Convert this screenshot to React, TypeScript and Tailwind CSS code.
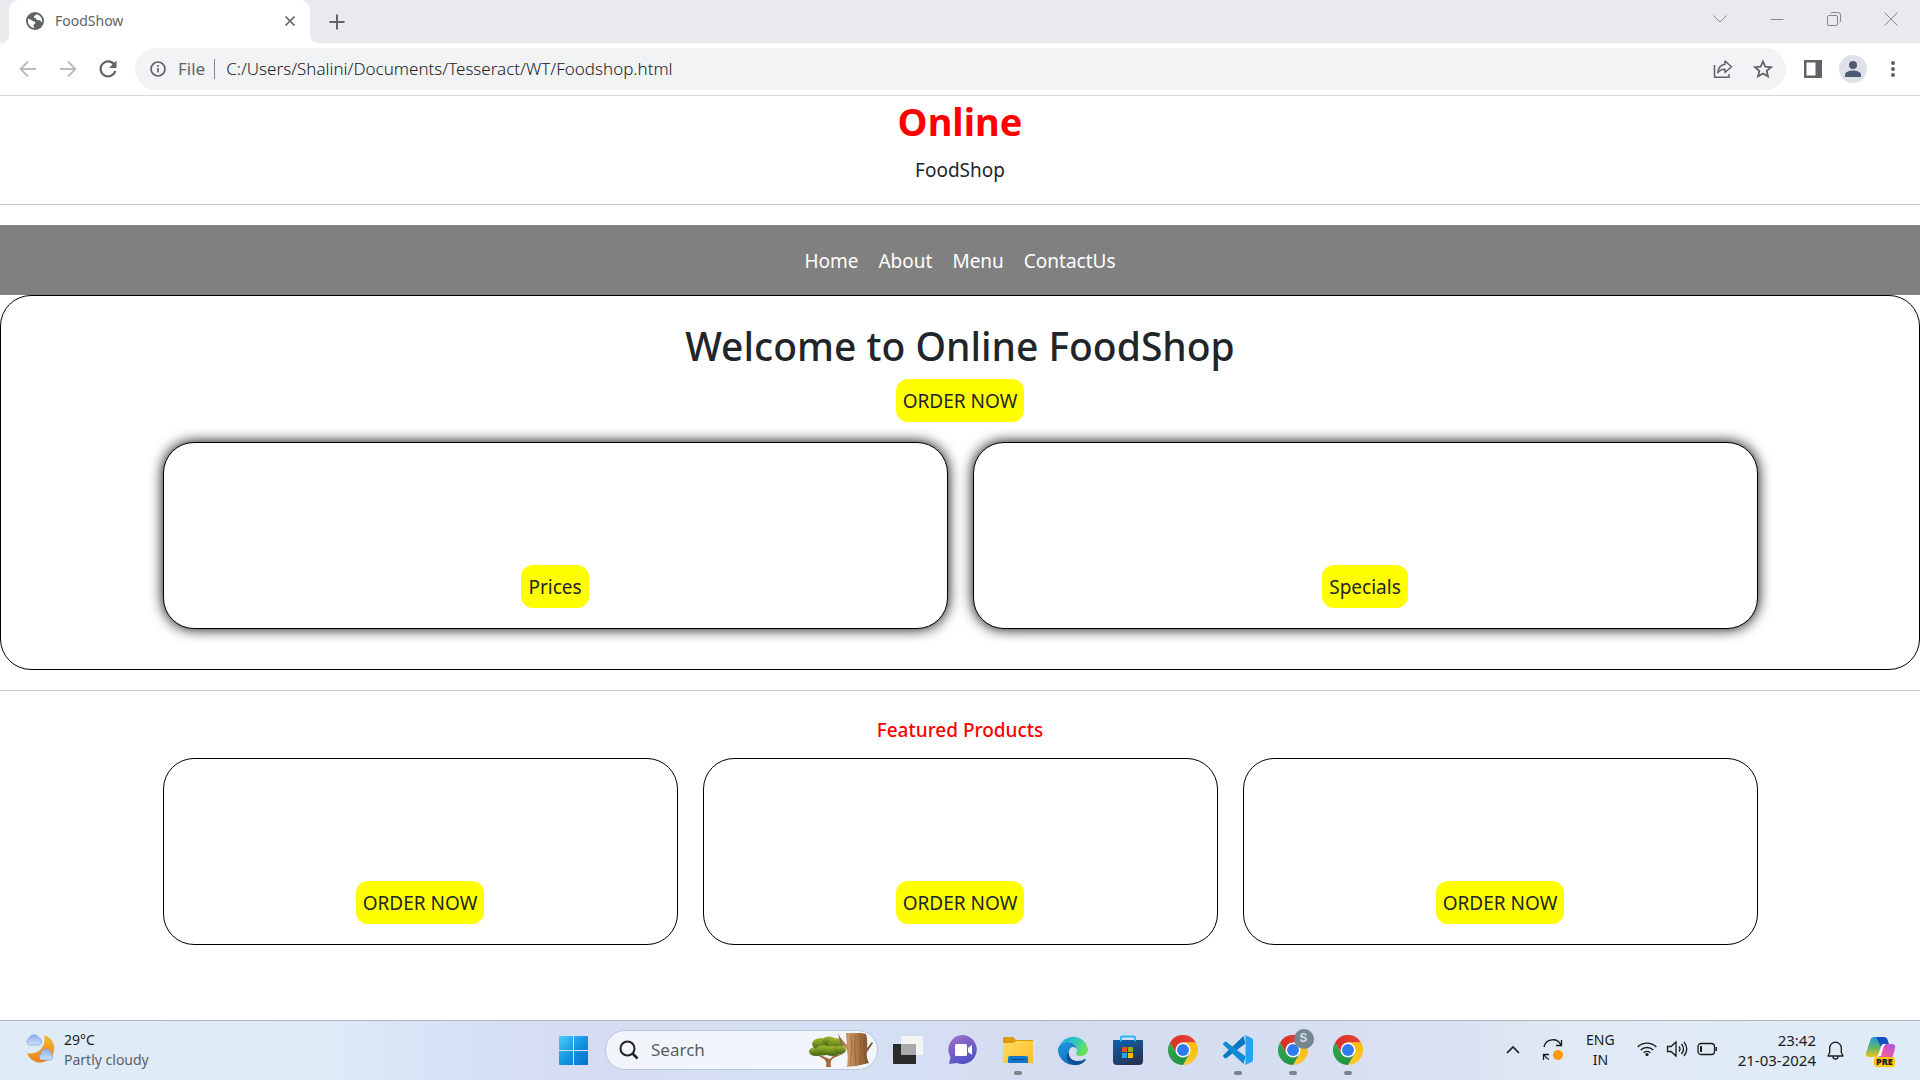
import React from "react";

const strip = "flex items-center";

function Chrome({ id, badge }: { id: string; badge?: boolean }) {
  return (
    <span className="relative block size-[30px]">
      <svg viewBox="0 0 48 48" className="size-[30px]" aria-hidden="true">
        <defs>
          <linearGradient id={id + "r"} x1="0" y1="0" x2="1" y2="0"><stop stopColor="#d93025" /><stop offset="1" stopColor="#ea4335" /></linearGradient>
          <linearGradient id={id + "y"} x1="0" y1="0" x2="0" y2="1"><stop stopColor="#fbbc04" /><stop offset="1" stopColor="#fcc934" /></linearGradient>
          <linearGradient id={id + "g"} x1="0" y1="0" x2="1" y2="1"><stop stopColor="#34a853" /><stop offset="1" stopColor="#1e8e3e" /></linearGradient>
        </defs>
        <path d="M24 12h20.8A24 24 0 0 0 3.2 12l10.4 18z" fill={`url(#${id}r)`} />
        <path d="M34.4 30 24 48a24 24 0 0 0 20.8-36H24z" fill={`url(#${id}y)`} />
        <path d="M13.6 30 3.2 12A24 24 0 0 0 24 48l10.4-18z" fill={`url(#${id}g)`} />
        <circle cx="24" cy="24" r="12" fill="#fff" />
        <circle cx="24" cy="24" r="9.5" fill="#2f7af0" />
      </svg>
      {badge && (
        <span className="absolute -top-1.5 left-4 flex size-5 items-center justify-center rounded-full bg-[#74868f] font-['Liberation_Mono'] text-[13px] font-bold text-[#d5dde2]">S</span>
      )}
    </span>
  );
}

function Task({ label, running, children }: { label: string; running?: boolean; children: React.ReactNode }) {
  return (
    <button type="button" aria-label={label} className="flex w-[55px] flex-col items-center pt-[14px]">
      {children}
      <span className={running ? "mt-1.5 h-1 w-2 rounded-full bg-[#7d828c]" : "mt-1.5 h-1 w-2"} />
    </button>
  );
}

function Pill({ children }: { children: React.ReactNode }) {
  return (
    <a href="#order" className="inline-block rounded-xl bg-[#ffff00] px-[7px] pt-[7px] pb-[5px] text-[19px] leading-[31px] text-[#212529]">
      {children}
    </a>
  );
}

function BrowserBar() {
  return (
    <header className="border-b border-[#d5d7da] bg-white font-['Noto_Sans',sans-serif]">
      <div className="flex h-[43px] bg-[#e8eaed]">
        <div className="w-[9px] bg-white"><div className="h-full rounded-br-lg bg-[#e8eaed]" /></div>
        <div className={`${strip} w-[301px] rounded-t-[10px] bg-white pr-[14px] pb-[2px] pl-[17px]`}>
          <svg viewBox="0 0 24 24" className="size-[18px]" aria-hidden="true">
            <circle cx="12" cy="12" r="12" fill="#5f6368" />
            <path d="M3 9c3 .3 4 2 6.500 3.200 1.500.700 3 .500 3 2 0 1.700-2.500 1.600-2.500 3.300 0 1.500.800 2.300.800 4A9.800 9.800 0 0 1 3 9zM14 3c-.500 1.800-3.500 1.500-3.500 3.500 0 1.700 3 .800 3 2.600S16 11 18 11c1.700 0 1.500 2.500 3.500 2.500A9.600 9.600 0 0 0 14 3z" fill="#fff" />
          </svg>
          <span className="ml-[11px] flex-1 text-sm text-[#5f6368]">FoodShow</span>
          <button type="button" aria-label="Close tab">
            <svg viewBox="0 0 12 12" className="size-3" stroke="#5f6368" strokeWidth="1.700"><path d="M1.500 1.500l9 9M10.500 1.500l-9 9" /></svg>
          </button>
        </div>
        <div className="w-[9px] bg-white"><div className="h-full rounded-bl-lg bg-[#e8eaed]" /></div>
        <button type="button" aria-label="New tab" className="ml-[10px]">
          <svg viewBox="0 0 16 16" className="size-4" stroke="#5f6368" strokeWidth="2"><path d="M8 .500v15M.500 8h15" /></svg>
        </button>
        <div className="ml-auto flex items-center gap-[43px] pr-[22px] pb-[6px]">
          <button type="button" aria-label="Search tabs"><svg viewBox="0 0 14 14" className="size-[14px]" fill="none" stroke="#85878b"><path d="M.500 3.500 7 10l6.500-6.500" /></svg></button>
          <button type="button" aria-label="Minimize"><svg viewBox="0 0 14 14" className="size-[14px]" fill="none" stroke="#85878b"><path d="M.500 7.500h13" /></svg></button>
          <button type="button" aria-label="Restore"><svg viewBox="0 0 14 14" className="size-[14px]" fill="none" stroke="#85878b"><rect x=".500" y="3.500" width="10" height="10" rx="1.500" /><path d="M3.500 1.500q.500-1 1.500-1h6q2.500 0 2.500 2.500v6q0 1-1 1.500" /></svg></button>
          <button type="button" aria-label="Close"><svg viewBox="0 0 14 14" className="size-[14px]" fill="none" stroke="#85878b"><path d="M.500.500l13 13M13.500.500l-13 13" /></svg></button>
        </div>
      </div>
      <div className={`${strip} h-[52px] pr-[25px] pl-[19px]`}>
        <button type="button" aria-label="Back"><svg viewBox="0 0 18 18" className="size-[18px]" fill="none" stroke="#b9bbbe" strokeWidth="1.800"><path d="M17 9H2M9 1.500 1.500 9 9 16.500" /></svg></button>
        <button type="button" aria-label="Forward" className="ml-[22px]"><svg viewBox="0 0 18 18" className="size-[18px]" fill="none" stroke="#b9bbbe" strokeWidth="1.800"><path d="M1 9h15M9 1.500 16.500 9 9 16.500" /></svg></button>
        <button type="button" aria-label="Reload" className="ml-[22px]"><svg viewBox="0 0 18 18" className="size-[18px]" fill="none" stroke="#5f6368" strokeWidth="2.200"><path d="M15.200 4.500A7.500 7.500 0 1 0 16.300 11" /><path d="M17.500.500v7.500H10z" fill="#5f6368" stroke="none" /></svg></button>
        <div className={`${strip} ml-[18px] h-[42px] flex-1 rounded-full bg-[#f1f3f4] pr-[13px] pl-[15px]`}>
          <svg viewBox="0 0 16 16" className="size-4 shrink-0" fill="none" stroke="#5f6368" strokeWidth="1.700"><circle cx="8" cy="8" r="7" /><path d="M8 7v4.500M8 4v1.700" /></svg>
          <span className="ml-[12px] text-[17px] text-[#5f6368]">File</span>
          <span className="ml-[9px] h-5 w-px bg-[#80868b]" />
          <input aria-label="Address" defaultValue="C:/Users/Shalini/Documents/Tesseract/WT/Foodshop.html" className="ml-[11px] min-w-0 flex-1 bg-transparent text-[17px] font-light text-[#202124] outline-none" />
          <button type="button" aria-label="Share"><svg viewBox="0 0 20 20" className="size-5" fill="none" stroke="#5f6368" strokeWidth="1.500"><path d="M1.500 6v12.200H16V15" /><path d="M12 2l6.500 5.700L12 13.500v-3.300c-3.500 0-5.500 1-7.200 3.600C5.200 9.500 7.500 6 12 5.300z" strokeLinejoin="round" /></svg></button>
          <button type="button" aria-label="Bookmark" className="ml-[20px]"><svg viewBox="0 0 20 20" className="size-5" fill="none" stroke="#5f6368" strokeWidth="1.800"><path d="M10 2.500l2.300 5.200 5.700.500-4.300 3.700 1.300 5.600-5-3-5 3 1.300-5.600L2 8.200l5.700-.500z" /></svg></button>
        </div>
        <button type="button" aria-label="Side panel" className="ml-[18px]"><svg viewBox="0 0 18 18" className="size-[18px]"><path fill="#5f6368" fillRule="evenodd" d="M0 0h18v18H0zM2.500 2.500v13h9v-13z" /></svg></button>
        <button type="button" aria-label="Profile" className="ml-[17px] flex size-7 items-center justify-center rounded-full bg-[#dfe1e6]"><svg viewBox="0 0 16 16" className="size-4" fill="#4c5b73"><circle cx="8" cy="4" r="4" /><path d="M0 16v-2c0-3 4-4.500 8-4.500s8 1.500 8 4.500v2z" /></svg></button>
        <button type="button" aria-label="More" className="ml-[24px]"><svg viewBox="0 0 4 18" className="h-[18px] w-1" fill="#5f6368"><circle cx="2" cy="3" r="2" /><circle cx="2" cy="9" r="2" /><circle cx="2" cy="15" r="2" /></svg></button>
      </div>
    </header>
  );
}

function Shop() {
  return (
    <main className="flex-1 bg-white text-center text-[19px] text-[#212529]">
      <h1 className="pt-px text-[38px] leading-[48px] font-bold text-[#ff0000]">Online</h1>
      <p className="mt-[10px] leading-[30px]">FoodShop</p>
      <hr className="mt-[19px] border-[#c8c9ca]" />
      <nav className="mt-5 flex h-[70px] items-center justify-center gap-5 bg-[#808080] pt-[2px] text-white">
        <a href="#home">Home</a>
        <a href="#about">About</a>
        <a href="#menu">Menu</a>
        <a href="#contact">ContactUs</a>
      </nav>
      <section className="rounded-[31px] border border-black px-5 pt-[26px] pb-10">
        <h2 className="text-[39px] leading-[48px] font-medium">Welcome to Online FoodShop</h2>
        <div className="mt-[9px] flex justify-center"><Pill>ORDER NOW</Pill></div>
        <div className="mx-auto mt-5 grid max-w-[1595px] grid-cols-2 gap-[25px]">
          {["Prices", "Specials"].map((t) => (
            <article key={t} className="flex h-[187px] items-end justify-center rounded-[31px] border border-black bg-white pb-5 shadow-[0_0_14px_#000]">
              <Pill>{t}</Pill>
            </article>
          ))}
        </div>
      </section>
      <hr className="mt-5 border-[#c8c9ca]" />
      <section className="px-5 pt-[24px]">
        <h3 className="text-[19px] leading-[30px] font-medium text-[#ff0000]">Featured Products</h3>
        <div className="mx-auto mt-[13px] grid max-w-[1595px] grid-cols-3 gap-[25px]">
          {[1, 2, 3].map((n) => (
            <article key={n} className="flex h-[187px] items-end justify-center rounded-[31px] border border-black pb-5">
              <Pill>ORDER NOW</Pill>
            </article>
          ))}
        </div>
      </section>
    </main>
  );
}

function Tree() {
  return (
    <svg viewBox="0 0 64 34" className="h-[34px] w-16 shrink-0" aria-hidden="true">
      <defs>
        <linearGradient id="bark"><stop stopColor="#8a5a38" /><stop offset=".3" stopColor="#c99768" /><stop offset=".6" stopColor="#a8703f" /><stop offset="1" stopColor="#70442a" /></linearGradient>
        <linearGradient id="leaf" x1="0" y1="0" x2="0" y2="1"><stop stopColor="#a4b932" /><stop offset="1" stopColor="#3e6411" /></linearGradient>
      </defs>
      <path d="M17 34c1-5 0-7-4-9l-5-3 1-1 9 4 3 1 4-4 9-1-7 3c-5 2-6 4-5 10z" fill="#a5683c" />
      <ellipse cx="7" cy="18.500" rx="7" ry="4.500" fill="url(#leaf)" />
      <ellipse cx="12" cy="11" rx="9" ry="6" fill="url(#leaf)" />
      <ellipse cx="20" cy="8" rx="7" ry="4.500" fill="url(#leaf)" />
      <ellipse cx="27" cy="11" rx="8" ry="6" fill="url(#leaf)" />
      <ellipse cx="14" cy="17.500" rx="8" ry="5" fill="url(#leaf)" />
      <ellipse cx="23" cy="18" rx="9" ry="5" fill="url(#leaf)" />
      <ellipse cx="31" cy="17" rx="6" ry="4" fill="url(#leaf)" />
      <path d="M38 34c1-7 1-12 0-17l-7-8-2-9 2 4 3 4 4 4-1-12q10-1.500 20 1c2 7 1 11 1 14l5-6 1 1-6 9c-1 5 1 9 2 11q-10 3-22 4z" fill="url(#bark)" />
      <path d="M42 2q2 15-1 30M46 2q-1 14 1 31M51 3q2 14 0 29M55 4q-1 14 2 26" fill="none" stroke="#6c4025" strokeWidth=".8" opacity=".5" />
    </svg>
  );
}

function Taskbar() {
  return (
    <footer className="grid h-[60px] grid-cols-[1fr_auto_1fr] border-t border-[#aeb4c2] bg-[linear-gradient(90deg,#dfebf5_0%,#deeaf6_17%,#d5e1f7_24%,#d6dcf1_30%,#d4e0f5_43%,#d6dcef_55%,#d5def1_66%,#dce1f1_76%,#dfeaf5_82%,#dfebf6_100%)] font-['Noto_Sans',sans-serif] text-sm leading-5 text-[#1b1b1b]">
      <button type="button" className="flex items-start justify-self-start pt-[9px] pl-[24px] text-left">
        <svg viewBox="0 0 32 32" className="mt-px size-8" aria-hidden="true">
          <defs>
            <linearGradient id="moon" x1="0" y1="0" x2="0" y2="1"><stop stopColor="#f5bb30" /><stop offset="1" stopColor="#ef7d18" /></linearGradient>
            <linearGradient id="cloud" x1="0" y1="0" x2="0" y2="1"><stop stopColor="#8cb0ed" /><stop offset="1" stopColor="#cddffb" /></linearGradient>
          </defs>
          <path d="M20 4a14 14 0 1 1-17 18c10 3 20-6 17-18z" fill="url(#moon)" />
          <path d="M5 14a4 4 0 0 1 0-7 5.500 5.500 0 0 1 10 0 3.600 3.600 0 0 1 0 7z" fill="url(#cloud)" stroke="#7fa4e6" strokeWidth=".7" />
          <path d="M17 29a3.500 3.500 0 0 1 0-6 5 5 0 0 1 10 0 3.300 3.300 0 0 1 0 6z" fill="url(#cloud)" stroke="#7fa4e6" strokeWidth=".7" />
        </svg>
        <span className="ml-2">29°C<span className="block text-[#5b6068]">Partly cloudy</span></span>
      </button>
      <div className="flex items-start pl-[14px]">
        <button type="button" aria-label="Start" className="pt-[15px]">
          <svg viewBox="0 0 29 29" className="size-[29px]"><defs><linearGradient id="win" x1="0" y1="0" x2="1" y2="1"><stop stopColor="#4ccdfc" /><stop offset=".5" stopColor="#1495e0" /><stop offset="1" stopColor="#0470cb" /></linearGradient></defs><path fill="url(#win)" d="M1 0h13v14H0V1q0-1 1-1zM15 0h13q1 0 1 1v13H15zM0 15h14v14H1q-1 0-1-1zM15 15h14v13q0 1-1 1H15z" /></svg>
        </button>
        <label className={`${strip} mt-[9px] ml-[17px] h-[40px] w-[273px] rounded-full border border-[#bcc6dd] bg-[#f2f5fc] pr-1 pl-[13px]`}>
          <svg viewBox="0 0 20 20" className="size-5 shrink-0" fill="none" stroke="#222" strokeWidth="2"><circle cx="8.500" cy="8.500" r="7" /><path d="M13.500 13.500l5 5" strokeWidth="2.500" /></svg>
          <input aria-label="Search" placeholder="Search" className="ml-[12px] min-w-0 flex-1 bg-transparent text-[17px] placeholder:text-[#5a5d63] outline-none" />
          <Tree />
        </label>
        <div className="flex pl-[2px]">
          <Task label="Task view">
            <svg viewBox="0 0 30 30" className="size-[30px]"><path d="M0 9h23v20H1q-1 0-1-1z" fill="#2b2b2b" /><path d="M8 1h22v19H8z" fill="#f4f4f4" /><path d="M8 9h15v11H8z" fill="#a9a9ab" /></svg>
          </Task>
          <Task label="Chat">
            <svg viewBox="0 0 30 30" className="size-[30px]"><defs><linearGradient id="chat" x1="0" y1="0" x2=".5" y2="1"><stop stopColor="#a573c8" /><stop offset="1" stopColor="#4f52c6" /></linearGradient></defs><path d="M15 0a14.500 14.500 0 1 1-6 28L1 29l1.500-7A14.500 14.500 0 0 1 15 0z" fill="url(#chat)" /><rect x="7" y="9" width="12" height="12" rx="1.500" fill="#fff" /><path d="M20 13l4-3v10l-4-3z" fill="#fff" /></svg>
          </Task>
          <Task label="File Explorer" running>
            <svg viewBox="0 0 30 30" className="size-[30px]"><defs><linearGradient id="fold" x1="0" y1="0" x2="1" y2="1"><stop stopColor="#ffdc5e" /><stop offset="1" stopColor="#fbbd2c" /></linearGradient></defs><path d="M0 3q0-1 1-1h9l3 3h17v3H0z" fill="#dc9b06" /><path d="M0 8h10l3-2h17v22H0z" fill="url(#fold)" /><path d="M5 28v-5q0-2 2-2h16q2 0 2 2v5z" fill="#1277cb" /><path d="M8 24.500h14" stroke="#0a4d90" strokeWidth="1.200" /></svg>
          </Task>
          <Task label="Edge">
            <svg viewBox="0 0 30 30" className="size-[30px]"><defs><linearGradient id="e1" x1="0" y1="0" x2="1" y2=".5"><stop stopColor="#1a9fe0" /><stop offset=".5" stopColor="#2fc6c7" /><stop offset="1" stopColor="#66e05a" /></linearGradient><linearGradient id="e2" x1="0" y1="0" x2=".7" y2="1"><stop stopColor="#1d9de0" /><stop offset="1" stopColor="#1568bd" /></linearGradient></defs><path d="M1 12A15 15 0 0 1 30 14c0 4-3 7-7 7-3 0-5-1-5-2s1-1.500 1-4c0-5-5-8-10-8-4 0-7 2-8 5z" fill="url(#e1)" /><path d="M0 15C0 10 5 7 9.500 7 15 7 19 11 19 15c0-2-2-3-4-3-3 0-5 4-4 8 1 5 6 8 11 8A15 15 0 0 1 0 15z" fill="url(#e2)" /><path d="M11 17c-1 6 4 9 9 9 3 0 5-1 7-2 1 0 1 .500.500 1.200C24 30 18 31 14 29.500 8 27 7 20 11 17z" fill="#104f98" /></svg>
          </Task>
          <Task label="Store">
            <svg viewBox="0 0 30 30" className="size-[30px]"><defs><linearGradient id="st" x1="0" y1="0" x2=".5" y2="1"><stop stopColor="#0f62b0" /><stop offset="1" stopColor="#263458" /></linearGradient></defs><path d="M0 6q0-1 1-1h28q1 0 1 1v20q0 4-4 4H4q-4 0-4-4z" fill="url(#st)" /><path d="M8 6.500V2.500q0-1 1-1h12q1 0 1 1v4" fill="none" stroke="#24b7f3" strokeWidth="1.800" /><path d="M9 12h5v5H9z" fill="#f25022" /><path d="M15 12h5v5h-5z" fill="#7fba00" /><path d="M9 18h5v5H9z" fill="#20a9f0" /><path d="M15 18h5v5h-5z" fill="#ffb900" /></svg>
          </Task>
          <Task label="Chrome"><Chrome id="a" /></Task>
          <Task label="Visual Studio Code" running>
            <svg viewBox="0 0 30 30" className="size-[30px]"><path d="M0 20.500 20.500 1l2 7.500L3.500 23q-1 .8-1.800 0L.3 21.700z" fill="#0a78bf" /><path d="M0 9.500 20.500 29l2-7.500L3.500 7q-1-.8-1.800 0L.3 8.300z" fill="#0c8bd5" /><path d="M20.500.800q1-1 2.300-.500L29 3.300q1 .500 1 1.500v20.400q0 1-1 1.500l-6.200 3q-1.300.500-2.300-.500 2 1.500 2-1V1.800q0-2.300-2-1z" fill="#25a4f0" /></svg>
          </Task>
          <Task label="Chrome, S profile" running><Chrome id="b" badge /></Task>
          <Task label="Chrome window" running><Chrome id="c" /></Task>
        </div>
      </div>
      <div className="flex items-start justify-self-end pt-[9px] pr-[24px]">
        <button type="button" aria-label="Hidden icons" className="mt-4"><svg viewBox="0 0 14 8" className="h-2 w-[14px]" fill="none" stroke="#1b1b1b" strokeWidth="1.700"><path d="M1 7l6-6 6 6" /></svg></button>
        <svg viewBox="0 0 22 22" className="mt-[9px] ml-[22px] size-[22px]" fill="none" stroke="#1b1b1b" strokeWidth="1.300" aria-hidden="true"><path d="M2 8a9 9 0 0 1 17-2M19.500 1v5.500H14M7 20.500A10 10 0 0 1 2 15.500M1.500 21v-5.500H7" /><circle cx="16" cy="16" r="5" fill="#ff9800" stroke="none" /></svg>
        <button type="button" className="ml-[22px] text-center">ENG<br />IN</button>
        <button type="button" aria-label="Quick settings" className="mt-[10px] ml-[22px] flex gap-[9px]">
          <svg viewBox="0 0 20 18" className="h-[18px] w-5" fill="none" stroke="#1b1b1b" strokeWidth="1.400"><path d="M.700 7a13 13 0 0 1 18.600 0M3.700 10a9 9 0 0 1 12.600 0M6.600 12.800a5 5 0 0 1 6.800 0" /><circle cx="10" cy="14.500" r="1.600" fill="#1b1b1b" stroke="none" /></svg>
          <svg viewBox="0 0 22 18" className="h-[18px] w-[22px]" fill="none" stroke="#1b1b1b" strokeWidth="1.300"><path d="M1.500 6.500H5l5-4.500v14l-5-4.500H1.500zM13 6.500q2 2.500 0 5M15.500 4q4 5 0 10M18 2q5.500 7 0 14" /></svg>
          <svg viewBox="0 0 21 14" className="mt-0.5 h-[14px] w-[21px]" fill="none" stroke="#1b1b1b" strokeWidth="1.300"><rect x="1" y="1.500" width="16.500" height="11" rx="3" /><path d="M3 4h2v6H3zM18.500 5h1.500v4h-1.500z" fill="#1b1b1b" stroke="none" /></svg>
        </button>
        <time className="ml-[20px] text-right text-[15px]">23:42<br />21-03-2024</time>
        <button type="button" aria-label="Notifications" className="mt-[11px] ml-[11px]"><svg viewBox="0 0 17 19" className="h-[19px] w-[17px]" fill="none" stroke="#1b1b1b" strokeWidth="1.300"><path d="M1 15l1.700-3.500V7a5.800 5.800 0 0 1 11.600 0v4.500L16 15zM6 15.500a2.500 2.500 0 0 0 5 0" strokeLinejoin="round" /></svg></button>
        <button type="button" aria-label="Copilot" className="relative mt-[7px] ml-[22px] size-[30px]">
          <svg viewBox="0 0 30 30" className="size-[30px]"><defs><linearGradient id="c1" x1="0" y1="0" x2="0" y2="1"><stop stopColor="#1e9be8" /><stop offset=".5" stopColor="#56b66b" /><stop offset="1" stopColor="#f3c416" /></linearGradient><linearGradient id="c2" x1="1" y1="0" x2="0" y2="1"><stop stopColor="#a855e8" /><stop offset=".6" stopColor="#ee5ca0" /><stop offset="1" stopColor="#fb8a5a" /></linearGradient></defs><path d="M8 0h12q-3 1-4 5l-3 11q-1 4-4 4H3q-4 0-3-4L4 4q1-4 4-4z" fill="url(#c1)" /><path d="M10 0h8q3 0 4 4l1 3h-4q-3 0-4 3z" fill="#1650c4" /><path d="M17 7h9q4 0 3 4l-2 8q-1 4-5 4H9q3 0 4-4l2-8q1-4 2-4z" fill="url(#c2)" /><path d="M17 7h3q-2 1-3 4l-2 8H12l3-8q1-4 2-4z" fill="#fff" /></svg>
          <span className="absolute top-5 left-2 rounded-[3px] bg-[#ffc70a] px-0.5 text-[9px] leading-[10px] font-black">PRE</span>
        </button>
      </div>
    </footer>
  );
}

export default function App() {
  return (
    <div className="flex min-h-screen flex-col bg-white font-['Noto_Sans',sans-serif]">
      <BrowserBar />
      <Shop />
      <Taskbar />
    </div>
  );
}
